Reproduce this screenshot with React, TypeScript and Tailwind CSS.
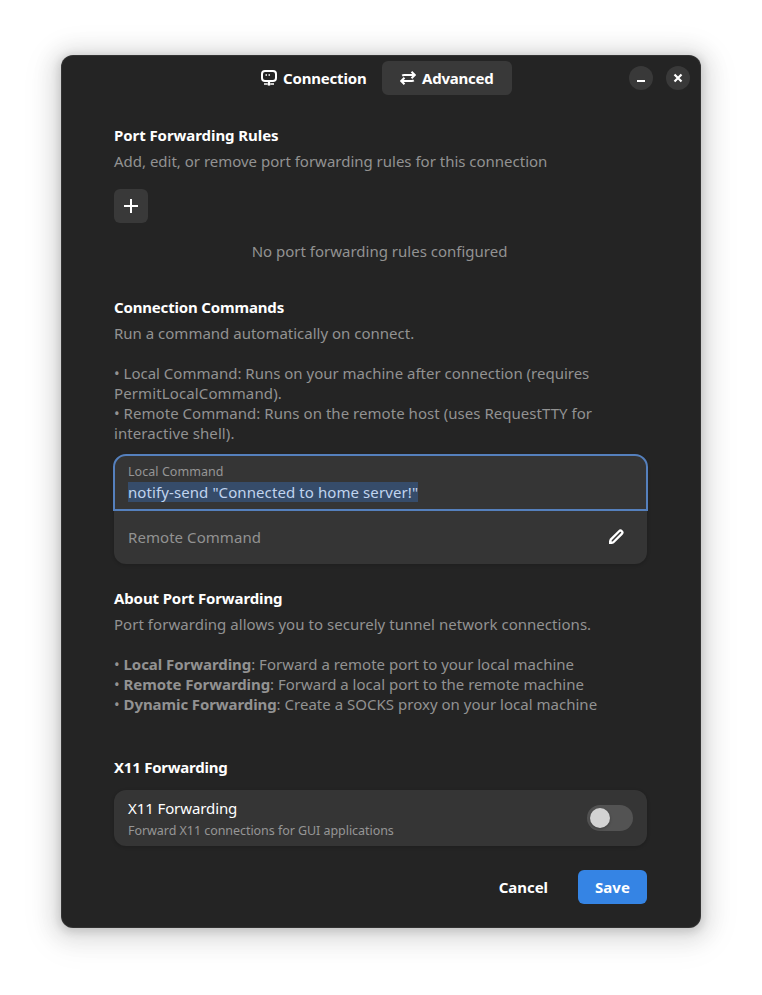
import { ReactNode } from "react";

function Group({ title, track, className, children }: { title: string; track: string; className: string; children: ReactNode }) {
  return (
    <section className={`flex flex-col ${className}`}>
      <h2 className={`h-5 whitespace-nowrap text-[15px] font-bold leading-5 text-white ${track}`}>{title}</h2>
      {children}
    </section>
  );
}

function Line({ children, className = "" }: { children: ReactNode; className?: string }) {
  return <p className={`h-5 whitespace-nowrap text-[15px] leading-5 text-[#929292] ${className}`}>{children}</p>;
}

function ConnectionIcon() {
  return (
    <svg width="16" height="16" viewBox="0 0 16 16" fill="none" stroke="white" strokeWidth="2">
      <rect x="1" y="1" width="14" height="10" rx="3" />
      <path d="M4.500 5h1.500M7.500 5h1.500" strokeWidth="1.500" />
      <path d="M8 11v2" strokeWidth="2" />
      <path d="M3 14h3M10 14h3" strokeWidth="1.600" />
      <circle cx="8" cy="14" r="1.800" fill="white" stroke="none" />
    </svg>
  );
}

function SwapIcon() {
  return (
    <svg width="16" height="16" viewBox="0 0 16 16" fill="none" stroke="white" strokeWidth="2">
      <path d="M2.200 5.600Q3 5 4.200 5H14.500M11.500 1.700L14.800 5l-3.300 3.300" />
      <path d="M13.800 10.400Q13 11 11.800 11H1.500M4.500 7.700L1.200 11l3.300 3.300" />
    </svg>
  );
}

function PencilIcon() {
  return (
    <svg width="16" height="16" viewBox="0 0 16 16" fill="none" stroke="white" strokeWidth="2.300" strokeLinejoin="round">
      <path d="M2.300 13.700l.4-3.100 8.400-8.400a1.900 1.900 0 0 1 2.700 2.700L5.400 13.300z" />
      <path d="M1 15v-4L5 15z" fill="white" stroke="none" />
    </svg>
  );
}

export default function App() {
  return (
    <div className="h-[995px] w-[762px] overflow-hidden bg-white pl-[61px] pt-[55px] font-['Noto_Sans',sans-serif]">
      <main className="flex h-[873px] w-[640px] flex-col rounded-xl bg-[#242424] shadow-[0_2px_8px_2px_rgba(0,0,0,0.13),0_3px_20px_10px_rgba(0,0,0,0.09),0_6px_32px_16px_rgba(0,0,0,0.04),inset_0_0_0_1px_rgba(255,255,255,0.07)]">
        <header className="flex h-[46px] items-center pl-[200px] text-[15px] font-bold text-white">
          <div className="flex w-[121px] items-center gap-1.5">
            <ConnectionIcon />
            <span className="tracking-[-0.18px]">Connection</span>
          </div>
          <div className="flex h-[34px] w-[130px] items-center gap-1.5 rounded-md bg-[#393939] pl-[18px]">
            <SwapIcon />
            <span className="tracking-[-0.22px]">Advanced</span>
          </div>
          <button className="ml-[117px] flex size-6 items-center justify-center rounded-full bg-[#393939]">
            <svg width="16" height="16" viewBox="0 0 16 16"><path d="M4 10h8v2H4z" fill="white" /></svg>
          </button>
          <button className="ml-[13px] flex size-6 items-center justify-center rounded-full bg-[#393939]">
            <svg width="16" height="16" viewBox="0 0 16 16"><path d="M4.500 4.500l7 7M11.500 4.500l-7 7" stroke="white" strokeWidth="2.200" /></svg>
          </button>
        </header>
        <div className="ml-[53px] flex w-[533px] flex-col">
          <Group title="Port Forwarding Rules" track="tracking-[-0.07px]" className="mt-6">
            <Line className="mt-1.5 tracking-[-0.01px]">Add, edit, or remove port forwarding rules for this connection</Line>
            <button className="mt-[18px] flex size-[34px] items-center justify-center rounded-md bg-[#393939]">
              <svg width="16" height="16" viewBox="0 0 16 16"><path d="M1 8h14M8 1v14" stroke="white" strokeWidth="2" /></svg>
            </button>
            <Line className="mt-[18px] pr-0.5 text-center">No port forwarding rules configured</Line>
          </Group>
          <Group title="Connection Commands" track="tracking-[-0.17px]" className="mt-9">
            <Line className="mt-1.5">Run a command automatically on connect.</Line>
            <Line className="mt-5">• Local Command: Runs on your machine after connection (requires</Line>
            <Line className="tracking-[0.12px]">PermitLocalCommand).</Line>
            <Line className="tracking-[0.04px]">• Remote Command: Runs on the remote host (uses RequestTTY for</Line>
            <Line className="tracking-[0.08px]">interactive shell).</Line>
            <div className="mt-3 h-[109px] rounded-xl bg-[#353535] shadow-[0_1px_3px_1px_rgba(0,0,0,0.12)]">
              <div className="-mx-px -mt-px h-[57px] rounded-t-[13px] border-2 border-[#5580bd] pl-[13px] pt-2">
                <p className="h-4 text-[12.5px] leading-4 tracking-[0.05px] text-[#969696]">Local Command</p>
                <span className="mt-0.5 block h-5 w-[290px] whitespace-nowrap bg-[#364c6a] text-[15px] leading-5 tracking-[0.09px] text-[#c0d4ef]">notify-send "Connected to home server!"</span>
              </div>
              <div className="flex h-[51px] items-center justify-between pl-3.5 pr-[23px]">
                <Line className="tracking-[0.06px]">Remote Command</Line>
                <PencilIcon />
              </div>
            </div>
          </Group>
          <Group title="About Port Forwarding" track="tracking-[-0.12px]" className="mt-6">
            <Line className="mt-1.5 tracking-[0.04px]">Port forwarding allows you to securely tunnel network connections.</Line>
            <Line className="mt-5">• <b className="tracking-[-0.06px]">Local Forwarding</b>: Forward a remote port to your local machine</Line>
            <Line>• <b className="tracking-[-0.08px]">Remote Forwarding</b>: Forward a local port to the remote machine</Line>
            <Line className="tracking-[0.02px]">• <b className="tracking-[-0.1px]">Dynamic Forwarding</b>: Create a SOCKS proxy on your local machine</Line>
          </Group>
          <Group title="X11 Forwarding" track="tracking-[-0.24px]" className="mt-[43px]">
            <div className="mt-[13px] flex h-14 items-center justify-between rounded-xl bg-[#353535] px-3.5 shadow-[0_1px_3px_1px_rgba(0,0,0,0.12)]">
              <div className="whitespace-nowrap">
                <p className="h-5 text-[15px] leading-5 tracking-[-0.1px] text-white">X11 Forwarding</p>
                <p className="mt-[5px] h-[15px] text-[12.5px] leading-4 tracking-[-0.05px] text-[#969696]">Forward X11 connections for GUI applications</p>
              </div>
              <div className="flex h-[26px] w-[46px] items-center rounded-full bg-[#535353] pl-[3px]">
                <span className="size-5 rounded-full bg-[#d2d2d2] shadow-[0_1px_3px_rgba(0,0,0,0.3)]" />
              </div>
            </div>
          </Group>
          <footer className="mt-6 flex h-[34px] items-center justify-end gap-[30px] text-[15px] font-bold text-white">
            <span className="tracking-[-0.05px]">Cancel</span>
            <button className="h-[34px] w-[69px] rounded-md bg-[#3584e4]">Save</button>
          </footer>
        </div>
      </main>
    </div>
  );
}
